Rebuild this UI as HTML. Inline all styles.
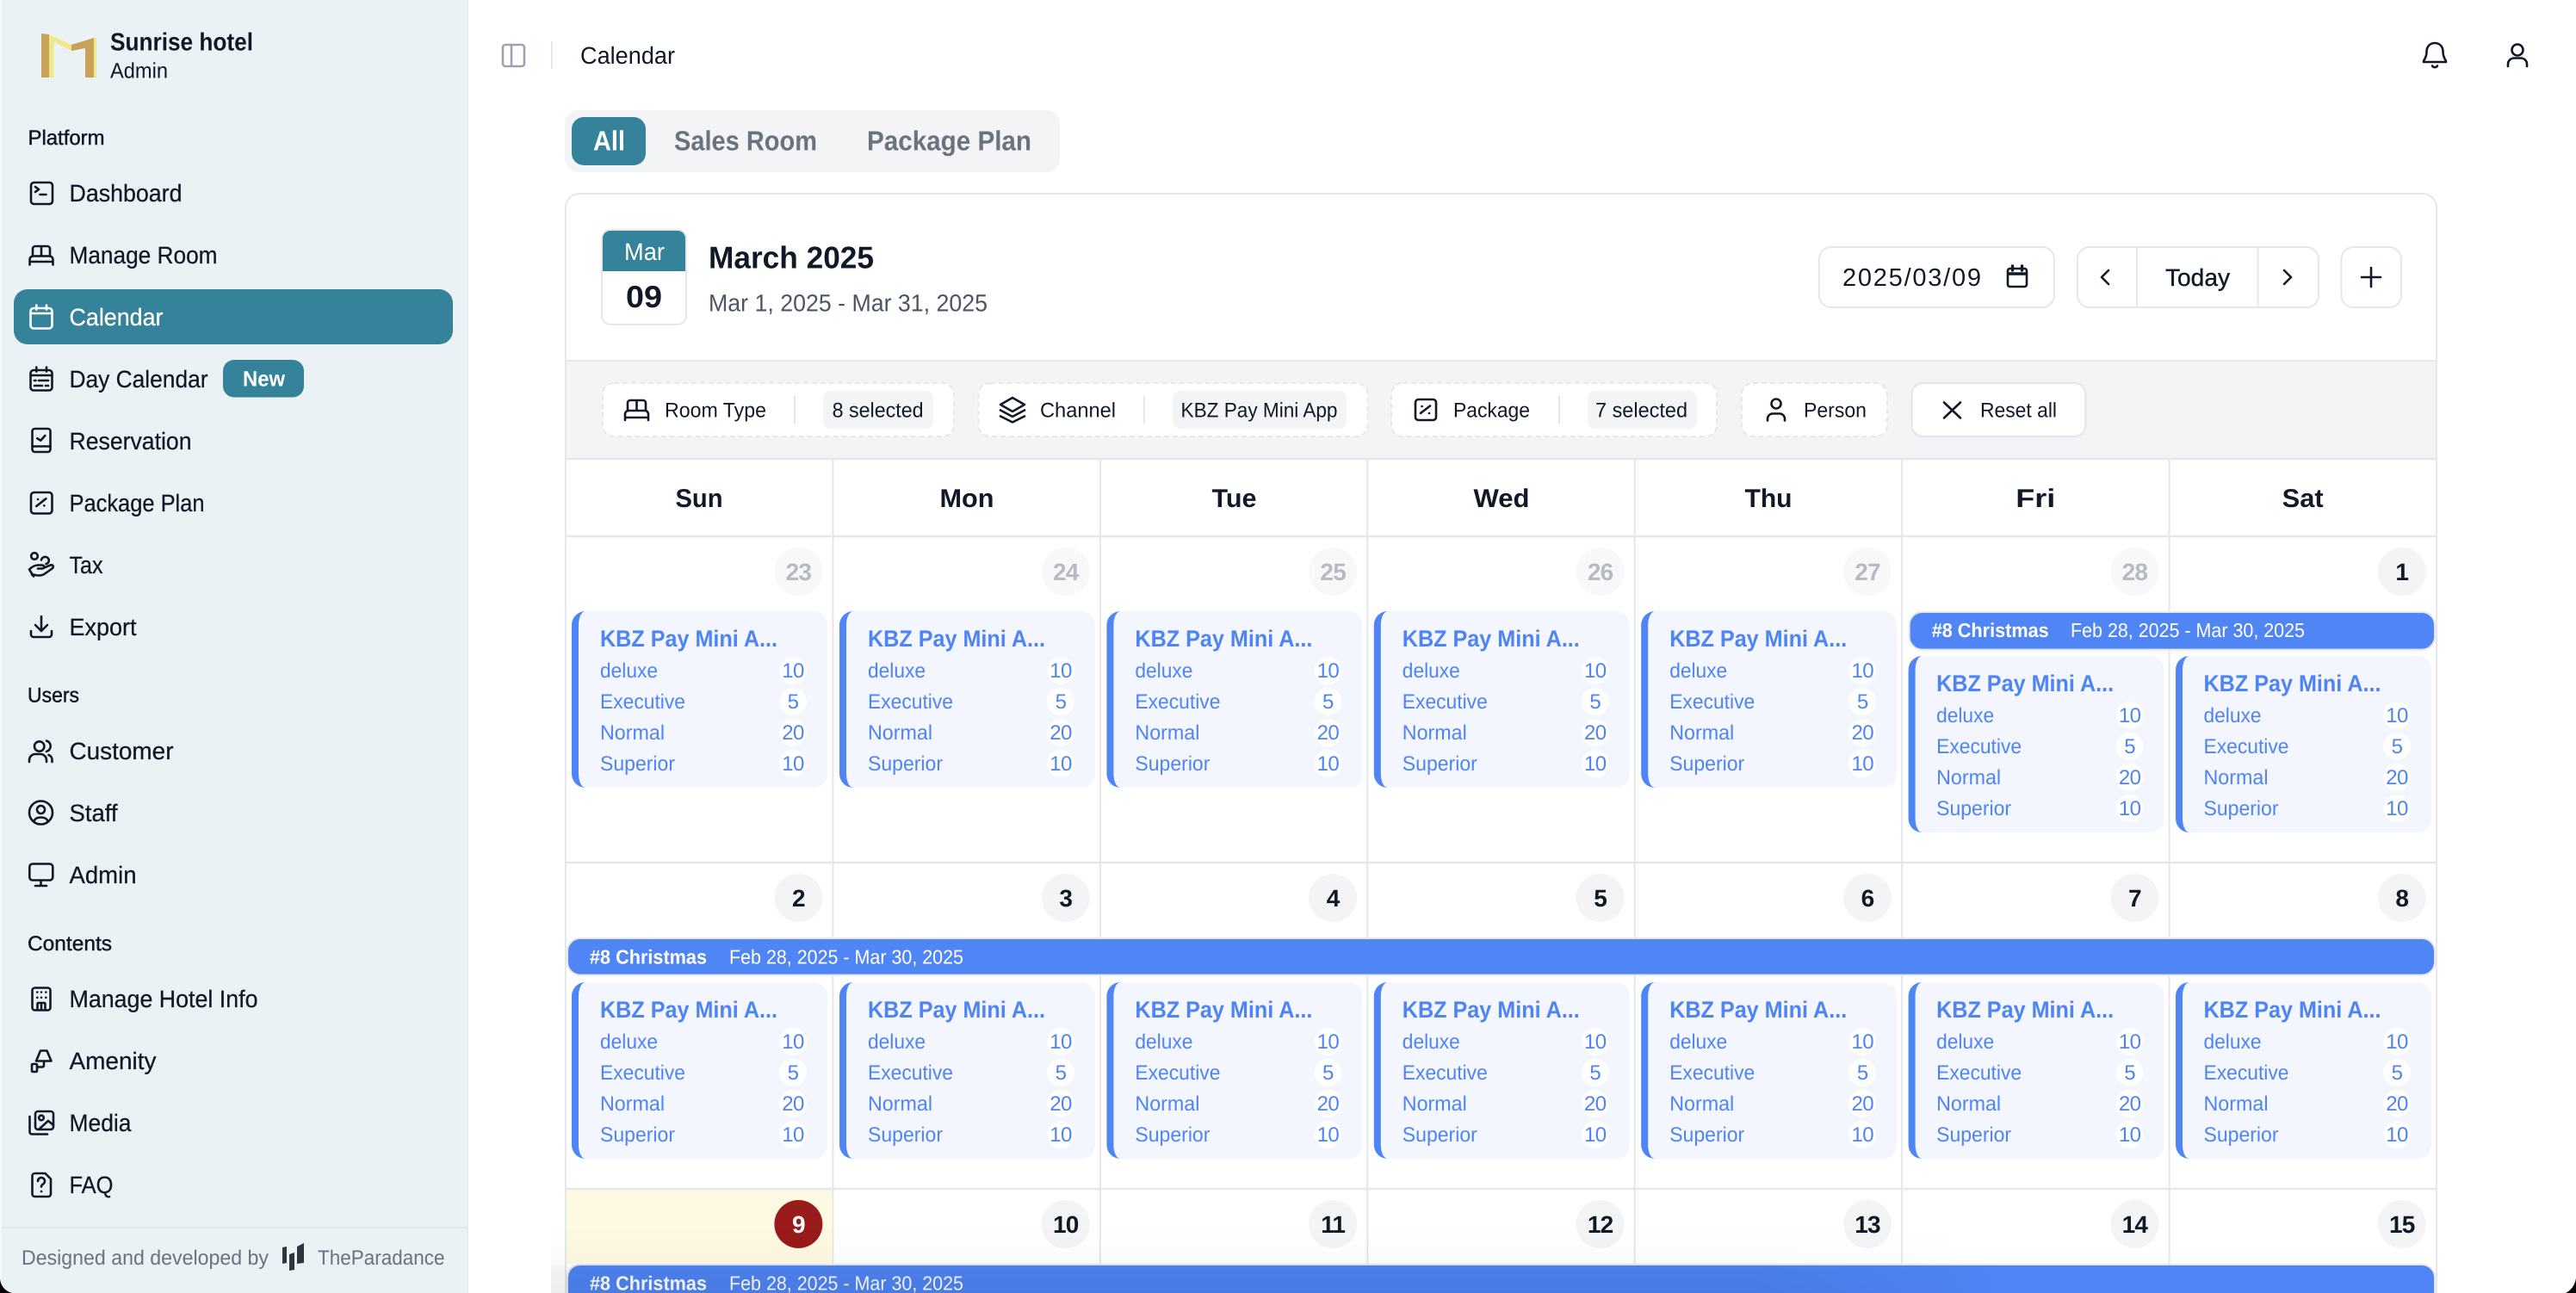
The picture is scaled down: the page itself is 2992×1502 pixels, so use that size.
<!DOCTYPE html>
<html lang="en">
<head>
<meta charset="utf-8">
<title>Calendar</title>
<style>
html,body{margin:0;padding:0;background:#fff}
svg{display:block}
text{font-family:"Liberation Sans",sans-serif;fill:#111827;text-rendering:geometricPrecision}
.s{font-size:28px;stroke:#111827;stroke-width:.25px}
.l{font-size:24px;stroke:#111827;stroke-width:.45px}
.f{font-size:24px;fill:#6b7280}
.x{font-size:24px}
.w{font-size:30px;font-weight:700;text-anchor:middle}
.d{font-size:28px;font-weight:700;text-anchor:middle;letter-spacing:-.8px}
.p{fill:#b7bbc1}
.k{font-size:27px;font-weight:700;fill:#4f84f4}
.b{font-size:24px;fill:#4f84f4}
.n{font-size:24px;fill:#4f84f4;text-anchor:middle;letter-spacing:-.6px}
.e1{font-size:23px;font-weight:700;fill:#fff}
.e2{font-size:23px;fill:#fff}
.i{fill:none;stroke:#111827;stroke-width:2.6;stroke-linecap:round;stroke-linejoin:round}
.bx{fill:#fff;stroke:#e5e7eb;stroke-width:2;stroke-dasharray:6 4}
.pl{fill:#f3f4f6}
.dv{stroke:#e5e7eb;stroke-width:2}
.dc{fill:#f3f4f6}
.dp{fill:#f7f8f9}
.ev{fill:#4f85f5;stroke:#e5e7eb;stroke-width:2}
</style>
</head>
<body>
<svg xmlns="http://www.w3.org/2000/svg" width="2992" height="1502" viewBox="0 0 2992 1502">
<defs>
<g id="c">
<rect width="40" height="205" rx="16" fill="#4f85f5"/>
<path d="M16 0H281a16 16 0 0 1 16 16V189a16 16 0 0 1-16 16H16a8 16 0 0 1-8-16V16a8 16 0 0 1 8-16z" fill="#f3f6fe"/>
<circle cx="257" cy="69" r="16" fill="#fff"/><circle cx="257" cy="105" r="16" fill="#fff"/><circle cx="257" cy="141" r="16" fill="#fff"/><circle cx="257" cy="177" r="16" fill="#fff"/>
</g>
<linearGradient id="ov" gradientUnits="userSpaceOnUse" x1="0" y1="1425" x2="0" y2="1502">
<stop offset="0" stop-color="#000" stop-opacity="0"/>
<stop offset=".55" stop-color="#000" stop-opacity=".02"/>
<stop offset=".65" stop-color="#000" stop-opacity=".055"/>
<stop offset="1" stop-color="#000" stop-opacity=".07"/>
</linearGradient>
<linearGradient id="hz" gradientUnits="userSpaceOnUse" x1="640" y1="0" x2="2340" y2="0">
<stop offset="0" stop-color="#fff"/>
<stop offset=".82" stop-color="#fff"/>
<stop offset="1" stop-color="#000"/>
</linearGradient>
<mask id="m" maskUnits="userSpaceOnUse" x="640" y="1400" width="1700" height="102"><rect x="640" y="1400" width="1700" height="102" fill="url(#hz)"/></mask>
</defs>

<!-- sidebar -->
<rect width="543" height="1502" fill="#ebf2f5"/>
<rect width="2" height="1502" fill="#f5f8f9"/>
<rect x="542" width="2" height="1502" fill="#e6ebee"/>
<!-- logo -->
<path d="M48 39l9 1v50h-9z" fill="#c9a15b"/>
<path d="M57 40l26 12v7L62.500 48.500V90H57z" fill="#efe88a"/>
<path d="M83 52l26-8v46H99V56l-16 3z" fill="#c9a15b"/>
<rect x="109" y="44" width="3" height="46" fill="#efe88a"/>
<text x="128" y="58.500" font-size="29" font-weight="700" textLength="166" lengthAdjust="spacingAndGlyphs">Sunrise hotel</text>
<text x="128" y="90.500" font-size="25" textLength="67" lengthAdjust="spacingAndGlyphs">Admin</text>

<text class="l" x="32.500" y="168" textLength="89" lengthAdjust="spacingAndGlyphs">Platform</text>
<rect x="16" y="336" width="510" height="64" rx="16" fill="#34839b"/>

<text class="s" x="80.500" y="234" textLength="131" lengthAdjust="spacingAndGlyphs">Dashboard</text>
<text class="s" x="80.500" y="306" textLength="172" lengthAdjust="spacingAndGlyphs">Manage Room</text>
<text class="s" x="80.500" y="378" textLength="109" lengthAdjust="spacingAndGlyphs" style="fill:#fff;stroke:#fff">Calendar</text>
<text class="s" x="80.500" y="450" textLength="161" lengthAdjust="spacingAndGlyphs">Day Calendar</text>
<rect x="259" y="418" width="94" height="43.500" rx="13" fill="#34839b"/>
<text x="282" y="448.500" font-size="25" font-weight="700" style="fill:#fff" textLength="49" lengthAdjust="spacingAndGlyphs">New</text>
<text class="s" x="80.500" y="522" textLength="142" lengthAdjust="spacingAndGlyphs">Reservation</text>
<text class="s" x="80.500" y="594" textLength="157" lengthAdjust="spacingAndGlyphs">Package Plan</text>
<text class="s" x="80.500" y="666" textLength="39" lengthAdjust="spacingAndGlyphs">Tax</text>
<text class="s" x="80.500" y="738" textLength="78" lengthAdjust="spacingAndGlyphs">Export</text>
<text class="l" x="32" y="815.500" textLength="60" lengthAdjust="spacingAndGlyphs">Users</text>
<text class="s" x="80.500" y="882" textLength="121" lengthAdjust="spacingAndGlyphs">Customer</text>
<text class="s" x="80.500" y="954" textLength="56" lengthAdjust="spacingAndGlyphs">Staff</text>
<text class="s" x="80.500" y="1026" textLength="78" lengthAdjust="spacingAndGlyphs">Admin</text>
<text class="l" x="32" y="1104" textLength="98" lengthAdjust="spacingAndGlyphs">Contents</text>
<text class="s" x="80.500" y="1170" textLength="219" lengthAdjust="spacingAndGlyphs">Manage Hotel Info</text>
<text class="s" x="80.500" y="1242" textLength="101" lengthAdjust="spacingAndGlyphs">Amenity</text>
<text class="s" x="80.500" y="1314" textLength="72" lengthAdjust="spacingAndGlyphs">Media</text>
<text class="s" x="80.500" y="1386" textLength="51" lengthAdjust="spacingAndGlyphs">FAQ</text>

<!-- sidebar icons -->
<g class="i">
<rect x="36" y="212" width="25" height="25" rx="3.500"/><path d="M41 217l4 3-4 3M46.500 226h7"/>
<path d="M38 297v-8a3 3 0 0 1 3-3h14a3 3 0 0 1 3 3v8M48 286v11M34.500 307.500v-6a4 4 0 0 1 4-4h19a4 4 0 0 1 4 4v6M34.500 304h27"/>
<g style="stroke:#fff"><rect x="35.500" y="358" width="25" height="23.500" rx="3.500"/><path d="M42.300 354.500v5M54 354.500v5M36 364h24"/></g>
<rect x="35.500" y="430" width="25" height="23.500" rx="3.500"/><path d="M42.300 426.500v5M54 426.500v5M36 436h24M45 442h11M40 442h1.500M40 448h9M53 448h3"/>
<rect x="37.500" y="498" width="21" height="27" rx="3"/><path d="M37.500 518.500h21M43.300 509.300l4 2.400 5-5.700"/>
<rect x="36" y="572" width="24.500" height="24.500" rx="3.500"/><path d="M42.300 588l11-8.700M44 580h.1M51.300 587.300h.1"/>
<circle cx="40" cy="646" r="3.800"/><path d="M48 650.500a4.500 4.500 0 0 1 8.500-1c1 2.500-.5 5-3 5.500M34 661.500c3-3 6-5 10-5h5c3 0 3 4 0 4h-5M50 660l8.500-3.500c3-1 4.500 2 2 4l-8.500 6c-2 1.500-4 2-7 2-3.500 0-6-1.500-8-1M34 661.500l5 8"/>
<path d="M48 716v17M41 726l7 7 7-7M36 733v4a3 3 0 0 0 3 3h18a3 3 0 0 0 3-3v-4"/>
<circle cx="45.700" cy="867" r="5.700"/><path d="M34 885v-2a7 7 0 0 1 7-7h6a7 7 0 0 1 7 7v2M54 860.500a6.500 6.500 0 0 1 0 12.500M60.500 885v-2a6 6 0 0 0-4-6"/>
<circle cx="47.500" cy="944" r="13.500"/><circle cx="47.500" cy="940.500" r="4.500"/><path d="M39.500 954c1-3 4-4.500 8-4.500s7 1.500 8 4.500"/>
<rect x="34.300" y="1003.500" width="27" height="19" rx="3.500"/><path d="M47.500 1022.500v6M41 1029h13"/>
<rect x="37.500" y="1147.500" width="21" height="26" rx="3"/><path d="M43.500 1173v-7a1 1 0 0 1 1-1h7a1 1 0 0 1 1 1v7M48 1165v8"/>
<path d="M47 1220.500h7.500l5 12h-17.500zM51 1233.500v4a2 2 0 0 1-2 2h-6"/><rect x="37" y="1236" width="6" height="9" rx="1"/>
<rect x="41" y="1291" width="21" height="21" rx="3"/><circle cx="48" cy="1298.500" r="2.800"/><path d="M45 1312l11-10 6 5M34.500 1297v18a2.500 2.500 0 0 0 2.500 2.500h18"/>
<path d="M40.500 1363h12l6.500 6.500v17.500a3 3 0 0 1-3 3h-15.500a3 3 0 0 1-3-3v-21a3 3 0 0 1 3-3zM44 1372a4 4 0 1 1 6 3.500c-1.500 1-2 1.500-2 3M48 1384h.1"/>
</g>
<g fill="#111827">
<circle cx="43.300" cy="1152.500" r="1.300"/><circle cx="48" cy="1152.500" r="1.300"/><circle cx="53.300" cy="1152.500" r="1.300"/>
<circle cx="43.300" cy="1158.800" r="1.300"/><circle cx="48" cy="1158.800" r="1.300"/><circle cx="53.300" cy="1158.800" r="1.300"/>
</g>

<!-- sidebar footer -->
<rect x="2" y="1425" width="540" height="2" fill="#e4e8eb"/>
<text class="f" x="25" y="1469" textLength="287" lengthAdjust="spacingAndGlyphs">Designed and developed by</text>
<path d="M328 1449l5-1v19l-5 1zM336 1457l6-2v20l-6 1zM345 1448l8-4v23l-8 1z" fill="#2f3640"/>
<text class="f" x="369" y="1469" textLength="147.500" lengthAdjust="spacingAndGlyphs">TheParadance</text>

<!-- topbar -->
<g fill="none" stroke="#9ca3af" stroke-width="2.600"><rect x="584" y="52" width="25" height="25" rx="3"/><path d="M594 52v25"/></g>
<path d="M641 48v32" class="dv"/>
<text x="674" y="74" font-size="28" textLength="110" lengthAdjust="spacingAndGlyphs">Calendar</text>
<g class="i">
<path d="M2828 50c-6 0-9.500 4.500-9.500 10 0 7-3.500 10-3.500 11v1h26v-1c0-1-3.500-4-3.500-11 0-5.500-3.500-10-9.500-10zM2825 76.500a3.500 3.500 0 0 0 6 0"/>
<circle cx="2924" cy="58" r="6.500"/><path d="M2913 77v-2.500a7 7 0 0 1 7-7h8a7 7 0 0 1 7 7v2.500"/>
</g>

<!-- tabs -->
<rect x="656" y="128" width="575" height="72" rx="16" fill="#f3f4f6"/>
<rect x="664" y="136" width="86" height="56" rx="14" fill="#34839b"/>
<text x="689" y="174.500" font-size="32" font-weight="700" style="fill:#fff" textLength="37" lengthAdjust="spacingAndGlyphs">All</text>
<text x="783" y="174.500" font-size="32" font-weight="700" style="fill:#6b7280" textLength="166" lengthAdjust="spacingAndGlyphs">Sales Room</text>
<text x="1007" y="174.500" font-size="32" font-weight="700" style="fill:#6b7280" textLength="191" lengthAdjust="spacingAndGlyphs">Package Plan</text>

<!-- card -->
<rect x="657" y="225" width="2173" height="1300" rx="16" fill="#fff" stroke="#e5e7eb" stroke-width="2"/>
<rect x="699" y="267" width="98" height="110" rx="10" fill="#fff" stroke="#e5e7eb" stroke-width="2"/>
<path d="M700 315v-38a9 9 0 0 1 9-9h78a9 9 0 0 1 9 9v38z" fill="#34839b"/>
<text x="725" y="302" font-size="28" style="fill:#fff" textLength="47" lengthAdjust="spacingAndGlyphs">Mar</text>
<text x="727" y="357" font-size="36" font-weight="700" textLength="42" lengthAdjust="spacingAndGlyphs">09</text>
<text x="823" y="311.500" font-size="36" font-weight="700" textLength="192" lengthAdjust="spacingAndGlyphs">March 2025</text>
<text x="823" y="361.500" font-size="28" style="fill:#4b5563" textLength="324" lengthAdjust="spacingAndGlyphs">Mar 1, 2025 - Mar 31, 2025</text>

<g fill="#fff" stroke="#e5e7eb" stroke-width="2">
<rect x="2113" y="287" width="273" height="70" rx="14"/>
<rect x="2413" y="287" width="280" height="70" rx="14"/>
<rect x="2719.500" y="287" width="69.500" height="70" rx="14"/>
</g>
<path d="M2482 288v68M2622.500 288v68" class="dv"/>
<text x="2140" y="332" font-size="29" textLength="161" lengthAdjust="spacing">2025/03/09</text>
<text x="2515" y="332" font-size="28" textLength="75" lengthAdjust="spacingAndGlyphs" style="stroke:#111827;stroke-width:.4px">Today</text>
<g class="i">
<rect x="2332" y="312" width="22" height="21" rx="2.500"/><path d="M2337.500 309v5M2348.500 309v5M2333 318h20" style="stroke-width:3.400"/>
<path d="M2449 314l-8 8 8 8M2653 314l8 8-8 8M2754 311v22M2743 322h22"/>
</g>

<!-- filter bar -->
<rect x="658" y="420" width="2171" height="112" fill="#f3f4f6"/>
<path d="M658 419h2171" class="dv"/>
<rect x="700" y="445" width="408" height="62" rx="13" class="bx"/>
<rect x="1136.500" y="445" width="452" height="62" rx="13" class="bx"/>
<rect x="1616" y="445" width="378" height="62" rx="13" class="bx"/>
<rect x="2023" y="445" width="169" height="62" rx="13" class="bx"/>
<rect x="2220.500" y="445" width="202" height="62" rx="13" fill="#fff" stroke="#e5e7eb" stroke-width="2.400"/>
<path d="M923 460v32M1329 460v32M1811 460v32" class="dv"/>
<rect x="956" y="454" width="128" height="44" rx="9" class="pl"/>
<rect x="1362" y="454" width="202" height="44" rx="9" class="pl"/>
<rect x="1844" y="454" width="127" height="44" rx="9" class="pl"/>
<text class="x" x="772" y="484.500" textLength="118" lengthAdjust="spacingAndGlyphs">Room Type</text>
<text class="x" x="966.600" y="484.500" textLength="106" lengthAdjust="spacingAndGlyphs">8 selected</text>
<text class="x" x="1208" y="484.500" textLength="88" lengthAdjust="spacingAndGlyphs">Channel</text>
<text class="x" x="1371.500" y="484.500" textLength="182" lengthAdjust="spacingAndGlyphs">KBZ Pay Mini App</text>
<text class="x" x="1688" y="484.500" textLength="89" lengthAdjust="spacingAndGlyphs">Package</text>
<text class="x" x="1853" y="484.500" textLength="107" lengthAdjust="spacingAndGlyphs">7 selected</text>
<text class="x" x="2095" y="484.500" textLength="73" lengthAdjust="spacingAndGlyphs">Person</text>
<text class="x" x="2300" y="484.500" textLength="89" lengthAdjust="spacingAndGlyphs">Reset all</text>
<g class="i">
<path d="M729 477v-9a3 3 0 0 1 3-3h15a3 3 0 0 1 3 3v9M739.500 465v12M726 488v-7a4 4 0 0 1 4-4h19a4 4 0 0 1 4 4v7M726 485h27"/>
<path d="M1176 462l14 8-14 8-14-8zM1162 476.500l14 7.500 14-7.500M1162 483.500l14 7 14-7"/>
<rect x="1644" y="464" width="24" height="24" rx="3.500"/><path d="M1650 480l11-8.500M1651.500 472h.1M1660 480h.1"/>
<circle cx="2063" cy="469" r="5.500"/><path d="M2053 488.500v-2a6 6 0 0 1 6-6h8a6 6 0 0 1 6 6v2"/>
<path d="M2258 467.500l19 18M2277 467.500l-19 18"/>
</g>

<!-- grid lines -->
<path d="M658 533h2171M658 623h2171M658 1002h2171M658 1381h2171" fill="none" stroke="#e5e7eb" stroke-width="2.400"/>
<path d="M967.400 534v968M1277.900 534v968M1588.300 534v968M1898.700 534v968M2209.100 534v968M2519.600 534v968" class="dv"/>

<!-- weekdays -->
<text class="w" x="812" y="589" textLength="55" lengthAdjust="spacingAndGlyphs">Sun</text>
<text class="w" x="1123" y="589" textLength="63" lengthAdjust="spacingAndGlyphs">Mon</text>
<text class="w" x="1433.500" y="589" textLength="52" lengthAdjust="spacingAndGlyphs">Tue</text>
<text class="w" x="1744" y="589" textLength="65" lengthAdjust="spacingAndGlyphs">Wed</text>
<text class="w" x="2054" y="589" textLength="55" lengthAdjust="spacingAndGlyphs">Thu</text>
<text class="w" x="2364.300" y="589" textLength="46" lengthAdjust="spacingAndGlyphs">Fri</text>
<text class="w" x="2674.700" y="589" textLength="48" lengthAdjust="spacingAndGlyphs">Sat</text>

<!-- today cell -->
<rect x="658" y="1382.500" width="308.500" height="85" fill="#fef9e3"/>

<!-- day circles -->
<g>
<circle class="dp" cx="927.400" cy="664" r="28"/><circle class="dp" cx="1237.800" cy="664" r="28"/><circle class="dp" cx="1548.200" cy="664" r="28"/><circle class="dp" cx="1858.600" cy="664" r="28"/><circle class="dp" cx="2169" cy="664" r="28"/><circle class="dp" cx="2479.400" cy="664" r="28"/><circle class="dc" cx="2789.800" cy="664" r="28"/>
<circle class="dc" cx="927.400" cy="1043" r="28"/><circle class="dc" cx="1237.800" cy="1043" r="28"/><circle class="dc" cx="1548.200" cy="1043" r="28"/><circle class="dc" cx="1858.600" cy="1043" r="28"/><circle class="dc" cx="2169" cy="1043" r="28"/><circle class="dc" cx="2479.400" cy="1043" r="28"/><circle class="dc" cx="2789.800" cy="1043" r="28"/>
<circle cx="927.400" cy="1422" r="28" fill="#991b1b"/><circle class="dc" cx="1237.800" cy="1422" r="28"/><circle class="dc" cx="1548.200" cy="1422" r="28"/><circle class="dc" cx="1858.600" cy="1422" r="28"/><circle class="dc" cx="2169" cy="1422" r="28"/><circle class="dc" cx="2479.400" cy="1422" r="28"/><circle class="dc" cx="2789.800" cy="1422" r="28"/>
</g>
<text class="d p" x="927.400" y="674">23</text><text class="d p" x="1237.800" y="674">24</text><text class="d p" x="1548.200" y="674">25</text><text class="d p" x="1858.600" y="674">26</text><text class="d p" x="2169" y="674">27</text><text class="d p" x="2479.400" y="674">28</text><text class="d" x="2789.800" y="674">1</text>
<text class="d" x="927.400" y="1053">2</text><text class="d" x="1237.800" y="1053">3</text><text class="d" x="1548.200" y="1053">4</text><text class="d" x="1858.600" y="1053">5</text><text class="d" x="2169" y="1053">6</text><text class="d" x="2479.400" y="1053">7</text><text class="d" x="2789.800" y="1053">8</text>
<text class="d" x="927.400" y="1432" style="fill:#fff">9</text><text class="d" x="1237.800" y="1432">10</text><text class="d" x="1548.200" y="1432">11</text><text class="d" x="1858.600" y="1432">12</text><text class="d" x="2169" y="1432">13</text><text class="d" x="2479.400" y="1432">14</text><text class="d" x="2789.800" y="1432">15</text>

<!-- events -->
<rect class="ev" x="2217.600" y="711" width="610.400" height="43.600" rx="15"/>
<text class="e1" x="2243.700" y="740" textLength="136" lengthAdjust="spacingAndGlyphs">#8 Christmas</text>
<text class="e2" x="2405" y="740" textLength="272" lengthAdjust="spacingAndGlyphs">Feb 28, 2025 - Mar 30, 2025</text>
<rect class="ev" x="659" y="1090" width="2169" height="42.600" rx="15"/>
<text class="e1" x="685" y="1119.300" textLength="136" lengthAdjust="spacingAndGlyphs">#8 Christmas</text>
<text class="e2" x="847" y="1119.300" textLength="272" lengthAdjust="spacingAndGlyphs">Feb 28, 2025 - Mar 30, 2025</text>
<rect class="ev" x="659" y="1469" width="2169" height="60" rx="15"/>
<text class="e1" x="685" y="1498.300" textLength="136" lengthAdjust="spacingAndGlyphs">#8 Christmas</text>
<text class="e2" x="847" y="1498.300" textLength="272" lengthAdjust="spacingAndGlyphs">Feb 28, 2025 - Mar 30, 2025</text>

<!-- row 1 cards -->
<g transform="translate(664 710)"><use href="#c"/><text class="k" x="33" y="41" textLength="206" lengthAdjust="spacingAndGlyphs">KBZ Pay Mini A...</text><text class="b" x="33" y="77" textLength="67" lengthAdjust="spacingAndGlyphs">deluxe</text><text class="b" x="33" y="113" textLength="99" lengthAdjust="spacingAndGlyphs">Executive</text><text class="b" x="33" y="149" textLength="75" lengthAdjust="spacingAndGlyphs">Normal</text><text class="b" x="33" y="185" textLength="87" lengthAdjust="spacingAndGlyphs">Superior</text><text class="n" x="257" y="77">10</text><text class="n" x="257" y="113">5</text><text class="n" x="257" y="149">20</text><text class="n" x="257" y="185">10</text></g>
<g transform="translate(975 710)"><use href="#c"/><text class="k" x="33" y="41" textLength="206" lengthAdjust="spacingAndGlyphs">KBZ Pay Mini A...</text><text class="b" x="33" y="77" textLength="67" lengthAdjust="spacingAndGlyphs">deluxe</text><text class="b" x="33" y="113" textLength="99" lengthAdjust="spacingAndGlyphs">Executive</text><text class="b" x="33" y="149" textLength="75" lengthAdjust="spacingAndGlyphs">Normal</text><text class="b" x="33" y="185" textLength="87" lengthAdjust="spacingAndGlyphs">Superior</text><text class="n" x="257" y="77">10</text><text class="n" x="257" y="113">5</text><text class="n" x="257" y="149">20</text><text class="n" x="257" y="185">10</text></g>
<g transform="translate(1285.400 710)"><use href="#c"/><text class="k" x="33" y="41" textLength="206" lengthAdjust="spacingAndGlyphs">KBZ Pay Mini A...</text><text class="b" x="33" y="77" textLength="67" lengthAdjust="spacingAndGlyphs">deluxe</text><text class="b" x="33" y="113" textLength="99" lengthAdjust="spacingAndGlyphs">Executive</text><text class="b" x="33" y="149" textLength="75" lengthAdjust="spacingAndGlyphs">Normal</text><text class="b" x="33" y="185" textLength="87" lengthAdjust="spacingAndGlyphs">Superior</text><text class="n" x="257" y="77">10</text><text class="n" x="257" y="113">5</text><text class="n" x="257" y="149">20</text><text class="n" x="257" y="185">10</text></g>
<g transform="translate(1595.800 710)"><use href="#c"/><text class="k" x="33" y="41" textLength="206" lengthAdjust="spacingAndGlyphs">KBZ Pay Mini A...</text><text class="b" x="33" y="77" textLength="67" lengthAdjust="spacingAndGlyphs">deluxe</text><text class="b" x="33" y="113" textLength="99" lengthAdjust="spacingAndGlyphs">Executive</text><text class="b" x="33" y="149" textLength="75" lengthAdjust="spacingAndGlyphs">Normal</text><text class="b" x="33" y="185" textLength="87" lengthAdjust="spacingAndGlyphs">Superior</text><text class="n" x="257" y="77">10</text><text class="n" x="257" y="113">5</text><text class="n" x="257" y="149">20</text><text class="n" x="257" y="185">10</text></g>
<g transform="translate(1906.200 710)"><use href="#c"/><text class="k" x="33" y="41" textLength="206" lengthAdjust="spacingAndGlyphs">KBZ Pay Mini A...</text><text class="b" x="33" y="77" textLength="67" lengthAdjust="spacingAndGlyphs">deluxe</text><text class="b" x="33" y="113" textLength="99" lengthAdjust="spacingAndGlyphs">Executive</text><text class="b" x="33" y="149" textLength="75" lengthAdjust="spacingAndGlyphs">Normal</text><text class="b" x="33" y="185" textLength="87" lengthAdjust="spacingAndGlyphs">Superior</text><text class="n" x="257" y="77">10</text><text class="n" x="257" y="113">5</text><text class="n" x="257" y="149">20</text><text class="n" x="257" y="185">10</text></g>
<g transform="translate(2216.600 762)"><use href="#c"/><text class="k" x="32.500" y="41" textLength="206" lengthAdjust="spacingAndGlyphs">KBZ Pay Mini A...</text><text class="b" x="32.500" y="77" textLength="67" lengthAdjust="spacingAndGlyphs">deluxe</text><text class="b" x="32.500" y="113" textLength="99" lengthAdjust="spacingAndGlyphs">Executive</text><text class="b" x="32.500" y="149" textLength="75" lengthAdjust="spacingAndGlyphs">Normal</text><text class="b" x="32.500" y="185" textLength="87" lengthAdjust="spacingAndGlyphs">Superior</text><text class="n" x="257" y="77">10</text><text class="n" x="257" y="113">5</text><text class="n" x="257" y="149">20</text><text class="n" x="257" y="185">10</text></g>
<g transform="translate(2527 762)"><use href="#c"/><text class="k" x="32.500" y="41" textLength="206" lengthAdjust="spacingAndGlyphs">KBZ Pay Mini A...</text><text class="b" x="32.500" y="77" textLength="67" lengthAdjust="spacingAndGlyphs">deluxe</text><text class="b" x="32.500" y="113" textLength="99" lengthAdjust="spacingAndGlyphs">Executive</text><text class="b" x="32.500" y="149" textLength="75" lengthAdjust="spacingAndGlyphs">Normal</text><text class="b" x="32.500" y="185" textLength="87" lengthAdjust="spacingAndGlyphs">Superior</text><text class="n" x="257" y="77">10</text><text class="n" x="257" y="113">5</text><text class="n" x="257" y="149">20</text><text class="n" x="257" y="185">10</text></g>

<!-- row 2 cards -->
<g transform="translate(664 1141)"><use href="#c"/><text class="k" x="33" y="41" textLength="206" lengthAdjust="spacingAndGlyphs">KBZ Pay Mini A...</text><text class="b" x="33" y="77" textLength="67" lengthAdjust="spacingAndGlyphs">deluxe</text><text class="b" x="33" y="113" textLength="99" lengthAdjust="spacingAndGlyphs">Executive</text><text class="b" x="33" y="149" textLength="75" lengthAdjust="spacingAndGlyphs">Normal</text><text class="b" x="33" y="185" textLength="87" lengthAdjust="spacingAndGlyphs">Superior</text><text class="n" x="257" y="77">10</text><text class="n" x="257" y="113">5</text><text class="n" x="257" y="149">20</text><text class="n" x="257" y="185">10</text></g>
<g transform="translate(975 1141)"><use href="#c"/><text class="k" x="33" y="41" textLength="206" lengthAdjust="spacingAndGlyphs">KBZ Pay Mini A...</text><text class="b" x="33" y="77" textLength="67" lengthAdjust="spacingAndGlyphs">deluxe</text><text class="b" x="33" y="113" textLength="99" lengthAdjust="spacingAndGlyphs">Executive</text><text class="b" x="33" y="149" textLength="75" lengthAdjust="spacingAndGlyphs">Normal</text><text class="b" x="33" y="185" textLength="87" lengthAdjust="spacingAndGlyphs">Superior</text><text class="n" x="257" y="77">10</text><text class="n" x="257" y="113">5</text><text class="n" x="257" y="149">20</text><text class="n" x="257" y="185">10</text></g>
<g transform="translate(1285.400 1141)"><use href="#c"/><text class="k" x="33" y="41" textLength="206" lengthAdjust="spacingAndGlyphs">KBZ Pay Mini A...</text><text class="b" x="33" y="77" textLength="67" lengthAdjust="spacingAndGlyphs">deluxe</text><text class="b" x="33" y="113" textLength="99" lengthAdjust="spacingAndGlyphs">Executive</text><text class="b" x="33" y="149" textLength="75" lengthAdjust="spacingAndGlyphs">Normal</text><text class="b" x="33" y="185" textLength="87" lengthAdjust="spacingAndGlyphs">Superior</text><text class="n" x="257" y="77">10</text><text class="n" x="257" y="113">5</text><text class="n" x="257" y="149">20</text><text class="n" x="257" y="185">10</text></g>
<g transform="translate(1595.800 1141)"><use href="#c"/><text class="k" x="33" y="41" textLength="206" lengthAdjust="spacingAndGlyphs">KBZ Pay Mini A...</text><text class="b" x="33" y="77" textLength="67" lengthAdjust="spacingAndGlyphs">deluxe</text><text class="b" x="33" y="113" textLength="99" lengthAdjust="spacingAndGlyphs">Executive</text><text class="b" x="33" y="149" textLength="75" lengthAdjust="spacingAndGlyphs">Normal</text><text class="b" x="33" y="185" textLength="87" lengthAdjust="spacingAndGlyphs">Superior</text><text class="n" x="257" y="77">10</text><text class="n" x="257" y="113">5</text><text class="n" x="257" y="149">20</text><text class="n" x="257" y="185">10</text></g>
<g transform="translate(1906.200 1141)"><use href="#c"/><text class="k" x="33" y="41" textLength="206" lengthAdjust="spacingAndGlyphs">KBZ Pay Mini A...</text><text class="b" x="33" y="77" textLength="67" lengthAdjust="spacingAndGlyphs">deluxe</text><text class="b" x="33" y="113" textLength="99" lengthAdjust="spacingAndGlyphs">Executive</text><text class="b" x="33" y="149" textLength="75" lengthAdjust="spacingAndGlyphs">Normal</text><text class="b" x="33" y="185" textLength="87" lengthAdjust="spacingAndGlyphs">Superior</text><text class="n" x="257" y="77">10</text><text class="n" x="257" y="113">5</text><text class="n" x="257" y="149">20</text><text class="n" x="257" y="185">10</text></g>
<g transform="translate(2216.600 1141)"><use href="#c"/><text class="k" x="32.500" y="41" textLength="206" lengthAdjust="spacingAndGlyphs">KBZ Pay Mini A...</text><text class="b" x="32.500" y="77" textLength="67" lengthAdjust="spacingAndGlyphs">deluxe</text><text class="b" x="32.500" y="113" textLength="99" lengthAdjust="spacingAndGlyphs">Executive</text><text class="b" x="32.500" y="149" textLength="75" lengthAdjust="spacingAndGlyphs">Normal</text><text class="b" x="32.500" y="185" textLength="87" lengthAdjust="spacingAndGlyphs">Superior</text><text class="n" x="257" y="77">10</text><text class="n" x="257" y="113">5</text><text class="n" x="257" y="149">20</text><text class="n" x="257" y="185">10</text></g>
<g transform="translate(2527 1141)"><use href="#c"/><text class="k" x="32.500" y="41" textLength="206" lengthAdjust="spacingAndGlyphs">KBZ Pay Mini A...</text><text class="b" x="32.500" y="77" textLength="67" lengthAdjust="spacingAndGlyphs">deluxe</text><text class="b" x="32.500" y="113" textLength="99" lengthAdjust="spacingAndGlyphs">Executive</text><text class="b" x="32.500" y="149" textLength="75" lengthAdjust="spacingAndGlyphs">Normal</text><text class="b" x="32.500" y="185" textLength="87" lengthAdjust="spacingAndGlyphs">Superior</text><text class="n" x="257" y="77">10</text><text class="n" x="257" y="113">5</text><text class="n" x="257" y="149">20</text><text class="n" x="257" y="185">10</text></g>

<!-- bottom shadow overlay -->
<rect x="640" y="1425" width="1700" height="77" fill="url(#ov)" mask="url(#m)"/>

<!-- window corners -->
<path d="M0 1484a18 18 0 0 0 14 18H0z" fill="#000"/>
<path d="M2992 1480a22 22 0 0 1-12 22h12z" fill="#000"/>
</svg>
</body>
</html>
